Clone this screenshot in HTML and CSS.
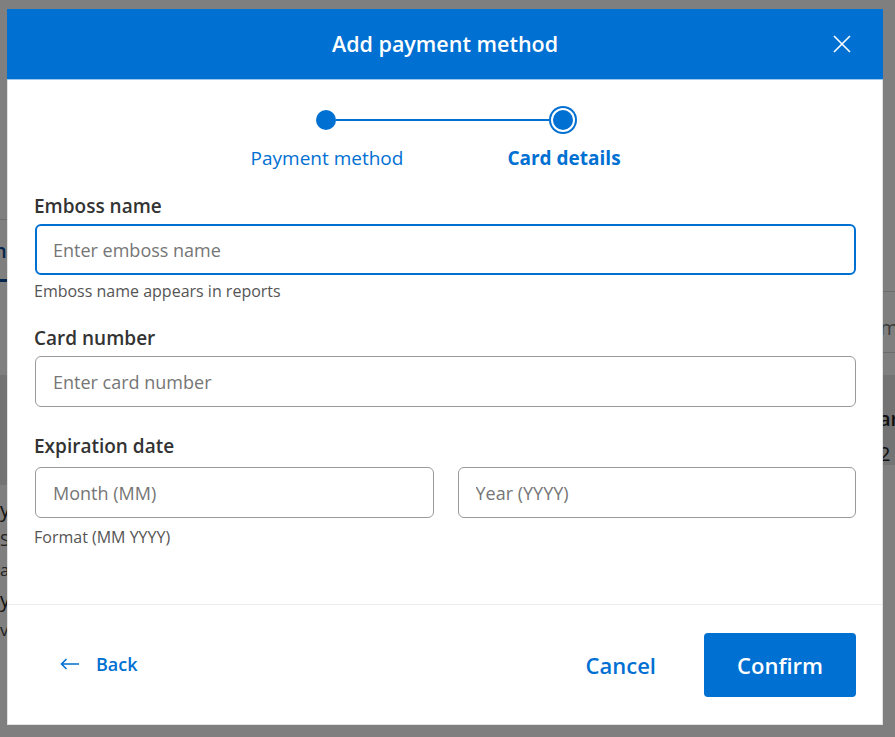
FILE: index.html
```html
<!DOCTYPE html>
<html lang="en">
<head>
<meta charset="utf-8">
<title>Add payment method</title>
<link rel="stylesheet" href="styles.css">
</head>
<body>
<div class="page">
  <div class="strip strip-left">
    <div class="bg-top"></div>
    <div class="bg-tab">n</div>
    <div class="bg-space"></div>
    <div class="bg-panel"></div>
    <div class="bg-lines">
      <div class="bg-line">y</div>
      <div class="bg-line small">S</div>
      <div class="bg-line small">a</div>
      <div class="bg-line">y</div>
      <div class="bg-line small">v</div>
    </div>
  </div>
  <div class="page-main"></div>
  <div class="strip strip-right">
    <div class="bg-top-r"></div>
    <div class="bg-row-r">m</div>
    <div class="bg-space-r"></div>
    <div class="bg-panel-r">
      <div class="bg-strong">ar</div>
      <div class="bg-num">2</div>
    </div>
  </div>
</div>

<div class="overlay">
  <div class="modal" role="dialog" aria-labelledby="modal-title">
    <header class="modal-header">
      <span></span>
      <h1 id="modal-title" class="modal-title">Add payment method</h1>
      <button class="close-btn" aria-label="Close">
        <svg width="18" height="18" viewBox="0 0 18 18"><path d="M1 1L17 17M17 1L1 17" stroke="#fff" stroke-width="1.6" fill="none"/></svg>
      </button>
    </header>

    <div class="stepper">
      <div class="track">
        <span class="dot"></span>
        <span class="line"></span>
        <span class="dot current"></span>
      </div>
      <div class="step-labels">
        <span class="step-label">Payment method</span>
        <span class="step-label active">Card details</span>
      </div>
    </div>

    <form class="form">
      <div class="field">
        <label class="field-label" for="emboss">Emboss name</label>
        <input id="emboss" class="input focused" type="text" placeholder="Enter emboss name" autofocus>
        <p class="helper">Emboss name appears in reports</p>
      </div>
      <div class="field">
        <label class="field-label" for="card">Card number</label>
        <input id="card" class="input" type="text" placeholder="Enter card number">
      </div>
      <div class="field field-group">
        <span class="field-label">Expiration date</span>
        <div class="date-row">
          <input class="input" type="text" placeholder="Month (MM)" aria-label="Month">
          <input class="input" type="text" placeholder="Year (YYYY)" aria-label="Year">
        </div>
        <p class="helper">Format (MM YYYY)</p>
      </div>
    </form>

    <footer class="modal-footer">
      <button class="btn-back" type="button">
        <svg width="20" height="12" viewBox="0 0 20 12"><path d="M19 6H1.5M6.5 1L1.5 6L6.5 11" stroke="#0070d2" stroke-width="1.6" fill="none"/></svg>
        <span>Back</span>
      </button>
      <div class="footer-actions">
        <button class="btn-cancel" type="button">Cancel</button>
        <button class="btn-confirm" type="button">Confirm</button>
      </div>
    </footer>
  </div>
</div>
</body>
</html>
```

FILE: styles.css
```css
* { box-sizing: border-box; }

html, body {
  margin: 0;
  height: 100%;
}

body {
  font-family: "Open Sans", "Noto Sans", "Liberation Sans", sans-serif;
  color: #333;
  background: #fff;
  overflow: hidden;
}

/* background page (under the overlay) */
.page {
  display: grid;
  grid-template-columns: 7px 1fr 12px;
  height: 737px;
  overflow: hidden;
}

.strip {
  overflow: hidden;
  white-space: nowrap;
  font-size: 20px;
  line-height: 27px;
}

.bg-top { height: 220px; border-bottom: 1px solid #d8d8d8; }
.bg-tab {
  height: 62px;
  color: #0b4f9a;
  font-weight: 600;
  padding-top: 17px;
  border-bottom: 3px solid #0b4f9a;
  text-indent: -6px;
}
.bg-space { height: 93px; }
.bg-panel { height: 110px; background: #e6e6e6; }
.bg-lines { padding-top: 11px; color: #222; }
.bg-line { height: 30px; }
.bg-line.small { font-size: 17px; color: #444; }

.bg-top-r { height: 292px; border-bottom: 1px solid #d8d8d8; }
.bg-row-r {
  height: 61px;
  border-bottom: 1px solid #d8d8d8;
  color: #777;
  padding-top: 22px;
  text-indent: -3px;
}
.bg-space-r { height: 22px; }
.bg-panel-r {
  height: 90px;
  background: #e6e6e6;
  padding-top: 30px;
  color: #222;
  text-indent: -4px;
}
.bg-strong { font-weight: 600; height: 35px; }

/* overlay + modal */
.overlay {
  position: fixed;
  inset: 0;
  background: rgba(0, 0, 0, 0.5);
  padding: 9px 12px 12px 7px;
}

.modal {
  width: 876px;
  height: 716px;
  background: #fff;
  border: 1px solid #e2e2e2;
  display: flex;
  flex-direction: column;
}

.modal-header {
  height: 71px;
  margin: -1px -1px 0;
  background: #0070d2;
  border-bottom: 1px solid #9cc6ea;
  display: grid;
  grid-template-columns: 1fr auto 1fr;
  align-items: center;
  padding: 0 32px;
}

.modal-title {
  margin: 0;
  color: #fff;
  font-size: 21.5px;
  font-weight: 600;
  line-height: 30px;
}

.close-btn {
  justify-self: end;
  background: none;
  border: 0;
  padding: 0;
  width: 18px;
  height: 18px;
  display: flex;
  cursor: pointer;
}

/* stepper */
.stepper {
  padding-top: 26px;
  display: flex;
  flex-direction: column;
  align-items: center;
}

.track {
  display: flex;
  align-items: center;
  width: 261px;
  height: 28px;
  margin-left: 3px;
}

.dot {
  width: 20px;
  height: 20px;
  border-radius: 50%;
  background: #0070d2;
  flex: none;
}

.dot.current {
  margin: 0 4px 0 4px;
  box-shadow: 0 0 0 2px #fff, 0 0 0 4px #0070d2;
}

.line {
  flex: 1;
  height: 2px;
  background: #0070d2;
}

.step-labels {
  margin-top: 11px;
  display: grid;
  grid-template-columns: 237px 237px;
  text-align: center;
  margin-left: 1px;
}

.step-label {
  font-size: 19px;
  line-height: 26px;
  color: #0070d2;
}

.step-label.active { font-weight: 700; }

/* form */
.form {
  flex: 1;
  padding: 22px 26px 0 26px;
  display: flex;
  flex-direction: column;
  gap: 23px;
}

.field {
  display: flex;
  flex-direction: column;
}

.field-label {
  font-size: 19px;
  font-weight: 600;
  line-height: 26px;
  color: #333;
  margin-bottom: 5px;
}

.input {
  height: 51px;
  width: calc(100% - 1px);
  border: 1px solid #9a9a9a;
  border-radius: 6px;
  padding: 0 17px;
  font: inherit;
  font-size: 18px;
  color: #333;
  background: #fff;
  outline: none;
  margin-left: 1px;
}

.input::placeholder { color: #767676; opacity: 1; }

.input.focused {
  border: 2px solid #0070d2;
  padding: 0 16px;
  caret-color: #333;
}

.helper {
  margin: 5px 0 0;
  font-size: 16px;
  line-height: 22px;
  color: #555;
}

.field-group { margin-top: 3px; }
.field-group .field-label { margin-bottom: 8px; }
.field-group .helper { margin-top: 8px; }

.date-row {
  display: grid;
  grid-template-columns: 1fr 1fr;
  gap: 24px;
  margin-left: 1px;
}

.date-row .input {
  width: 100%;
  margin-left: 0;
}

/* footer */
.modal-footer {
  height: 120px;
  border-top: 1px solid #ececec;
  display: flex;
  align-items: center;
  justify-content: space-between;
  padding: 0 26px 0 26px;
}

.btn-back {
  display: flex;
  align-items: center;
  gap: 16px;
  background: none;
  border: 0;
  padding: 0 26px;
  font: inherit;
  font-size: 18px;
  font-weight: 600;
  color: #0070d2;
  cursor: pointer;
  margin-top: -2px;
}

.footer-actions {
  display: flex;
  align-items: center;
  gap: 24px;
}

.btn-cancel {
  background: none;
  border: 0;
  padding: 0 24px;
  font: inherit;
  font-size: 22px;
  font-weight: 600;
  color: #0070d2;
  cursor: pointer;
}

.btn-confirm {
  width: 152px;
  height: 64px;
  border: 0;
  border-radius: 4px;
  background: #0070d2;
  color: #fff;
  font: inherit;
  font-size: 22px;
  font-weight: 600;
  cursor: pointer;
}
```
